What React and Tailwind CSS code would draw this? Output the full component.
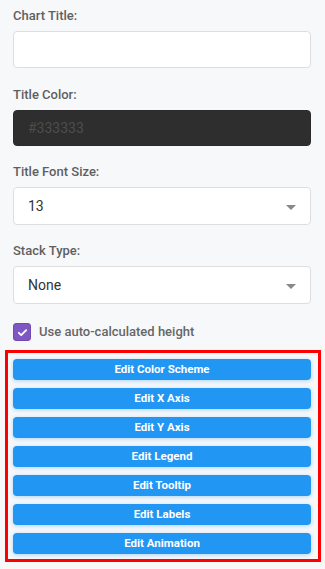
import { useState } from "react";

const buttons = [
  "Edit Color Scheme",
  "Edit X Axis",
  "Edit Y Axis",
  "Edit Legend",
  "Edit Tooltip",
  "Edit Labels",
  "Edit Animation",
];

function Label({ children, className = "" }) {
  return (
    <label
      className={`block h-[16px] text-[13px] leading-[16px] font-medium text-[#5f5f5f] ${className}`}
    >
      {children}
    </label>
  );
}

function Select({ value }) {
  return (
    <div className="relative mt-[7px] flex h-[38px] w-[298px] items-center rounded-[4px] border border-[#dedede] bg-white pl-[14px] text-[14px] text-[#333]">
      {value}
      <span className="absolute right-[14px] top-[17px] h-0 w-0 border-x-[5px] border-t-[5px] border-x-transparent border-t-[#888]" />
    </div>
  );
}

export default function App() {
  const [checked, setChecked] = useState(true);

  return (
    <div
      className="min-h-[569px] w-[325px] bg-[#f7f8fa] pt-[8px]"
      style={{ fontFamily: "Roboto, 'Noto Sans', sans-serif" }}
    >
      <div className="px-[13px]">
        <Label>Chart Title:</Label>
        <input
          className="mt-[7px] block h-[37px] w-[298px] rounded-[4px] border border-[#dedede] bg-white px-[14px] text-[14px] outline-none"
          defaultValue=""
        />

        <Label className="mt-[19px]">Title Color:</Label>
        <input
          className="mt-[7px] block h-[36px] w-[298px] rounded-[4px] border border-[#2b2b2b] bg-[#2e2e2e] px-[14px] text-[14px] text-[#ddd] outline-none placeholder:text-[#4d4d4d]"
          placeholder="#333333"
        />

        <Label className="mt-[18px]">Title Font Size:</Label>
        <Select value="13" />

        <Label className="mt-[18px]">Stack Type:</Label>
        <Select value="None" />

        <div
          className="mt-[19px] flex h-[18px] cursor-pointer items-center gap-[8px]"
          onClick={() => setChecked(!checked)}
        >
          <span className="flex h-[18px] w-[18px] items-center justify-center rounded-[3px] border border-[#6f4bb3] bg-[#7e57c2]">
            {checked ? (
              <svg width="11" height="11" viewBox="0 0 12 12">
                <path
                  d="M2 6.3l2.6 2.6L10 3.5"
                  fill="none"
                  stroke="white"
                  strokeWidth="2"
                  strokeLinecap="round"
                  strokeLinejoin="round"
                />
              </svg>
            ) : null}
          </span>
          <span className="text-[13px] font-medium text-[#666]">
            Use auto-calculated height
          </span>
        </div>
      </div>

      <div className="ml-[5px] mt-[9px] flex w-[316px] flex-col gap-[8px] border-[3px] border-[#ff0000] pb-[5px] pl-[5px] pr-[5px] pt-[6px]">
        {buttons.map((b) => (
          <button
            key={b}
            className="h-[21px] w-[298px] rounded-[4px] bg-[#2196f3] text-[11.5px] font-bold leading-[21px] text-white shadow-[0_1px_4px_rgba(33,150,243,0.35)]"
          >
            {b}
          </button>
        ))}
      </div>
    </div>
  );
}
